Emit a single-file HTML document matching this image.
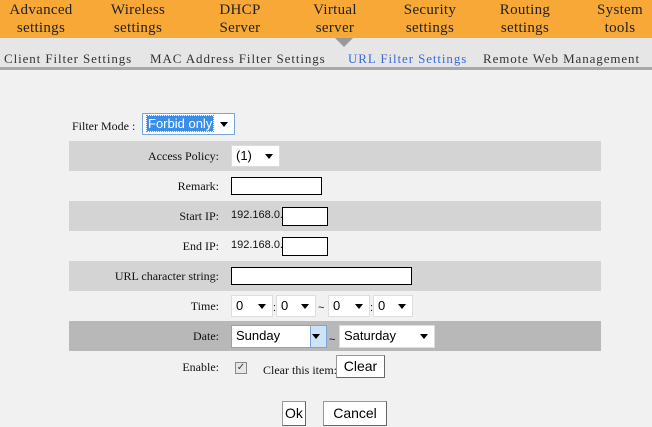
<!DOCTYPE html>
<html><head><style>
*{margin:0;padding:0;box-sizing:border-box}
body{width:652px;height:427px;background:#f1f1f1;font-family:"Liberation Serif",serif;position:relative;overflow:hidden}
.top{position:absolute;left:0;top:0;width:652px;height:38px;background:#f8a836}
.top div{position:absolute;top:1px;text-align:center;font-size:15px;line-height:18px;color:#222;letter-spacing:.3px}
.sub{position:absolute;left:0;top:38px;width:652px;height:32px;background:#e6e6e6;border-bottom:3px solid #a8a8a8}
.sub span{position:absolute;top:13px;font-size:13px;color:#333;letter-spacing:.9px}
.tri{position:absolute;left:335px;top:38px;width:0;height:0;border-left:9px solid transparent;border-right:9px solid transparent;border-top:9px solid #999}
.a{position:absolute;font-size:12px;color:#111}
.row{position:absolute;left:69px;width:532px;height:30px}
.g{background:#d4d4d4}.d{background:#b8b8b8}
.lab{position:absolute;right:382px;font-size:12px;color:#111;white-space:nowrap}
.box{position:absolute;background:#fff;border:1px solid #000}
.sel{position:absolute;background:#fff;border:1px solid #ddd;font-family:"Liberation Sans",sans-serif;font-size:13px;padding-left:4px;line-height:20px}
.sel:after{content:"";position:absolute;right:6px;top:8px;border-left:4px solid transparent;border-right:4px solid transparent;border-top:5px solid #000}
.btn{position:absolute;background:#fff;border:1px solid #999;border-bottom-color:#666;border-right-color:#666;font-family:"Liberation Sans",sans-serif;font-size:14px;text-align:center}
.t{position:absolute;font-family:"Liberation Sans",sans-serif;font-size:11px;color:#111}
</style></head><body>
<div class="top">
<div style="left:8px;width:66px">Advanced<br>settings</div>
<div style="left:110px;width:56px">Wireless<br>settings</div>
<div style="left:208px;width:64px">DHCP<br>Server</div>
<div style="left:300px;width:70px">Virtual<br>server</div>
<div style="left:390px;width:80px">Security<br>settings</div>
<div style="left:490px;width:70px">Routing<br>settings</div>
<div style="left:592px;width:56px">System<br>tools</div>
</div>
<div class="sub">
<span style="left:4px">Client Filter Settings</span>
<span style="left:150px">MAC Address Filter Settings</span>
<span style="left:348px;color:#3a6bd8">URL Filter Settings</span>
<span style="left:483px">Remote Web Management</span>
</div>
<div class="tri"></div>

<div class="a" style="left:72px;top:119px">Filter Mode :</div>
<div class="sel" style="left:142px;top:113px;width:93px;height:22px;border-color:#7aa7d8"><span style="background:#3b8ee8;color:#fff;outline:1px dotted #c80;padding:0 1px">Forbid only</span></div>

<div class="row g" style="top:141px"><div class="lab" style="top:8px">Access Policy:</div></div>
<div class="sel" style="left:231px;top:145px;width:49px;height:22px">(1)</div>

<div class="row" style="top:171px"><div class="lab" style="top:8px">Remark:</div></div>
<div class="box" style="left:231px;top:177px;width:91px;height:18px"></div>

<div class="row g" style="top:201px"><div class="lab" style="top:8px">Start IP:</div></div>
<div class="t" style="left:231px;top:209px">192.168.0.</div>
<div class="box" style="left:282px;top:207px;width:46px;height:19px"></div>

<div class="row" style="top:231px"><div class="lab" style="top:8px">End IP:</div></div>
<div class="t" style="left:231px;top:239px">192.168.0.</div>
<div class="box" style="left:282px;top:237px;width:46px;height:19px"></div>

<div class="row g" style="top:261px"><div class="lab" style="top:8px">URL character string:</div></div>
<div class="box" style="left:231px;top:267px;width:181px;height:18px"></div>

<div class="row" style="top:291px"><div class="lab" style="top:8px">Time:</div></div>
<div class="sel" style="left:231px;top:295px;width:42px;height:22px">0</div>
<div class="t" style="left:273px;top:302px">:</div>
<div class="sel" style="left:276px;top:295px;width:40px;height:22px">0</div>
<div class="t" style="left:318px;top:302px">~</div>
<div class="sel" style="left:328px;top:295px;width:42px;height:22px">0</div>
<div class="t" style="left:370px;top:302px">:</div>
<div class="sel" style="left:373px;top:295px;width:40px;height:22px">0</div>

<div class="row d" style="top:321px"><div class="lab" style="top:8px">Date:</div></div>
<div class="sel" style="left:231px;top:325px;width:96px;height:23px;border-color:#7aa7d8">Sunday<span style="position:absolute;right:0;top:0;width:16px;height:21px;background:#cde4f7;border-left:1px solid #7aa7d8"></span></div>
<div class="t" style="left:329px;top:334px">~</div>
<div class="sel" style="left:339px;top:325px;width:96px;height:23px">Saturday</div>

<div class="row" style="top:351px"><div class="lab" style="top:9px">Enable:</div></div>
<div style="position:absolute;left:235px;top:362px;width:12px;height:12px;border:1px solid #888;background:#e6e6e6;color:#335;font-size:10px;line-height:10px;text-align:center;font-family:'DejaVu Sans'">✓</div>
<div class="a" style="left:263px;top:363px">Clear this item:</div>
<div class="btn" style="left:336px;top:355px;width:49px;height:23px;line-height:20px">Clear</div>

<div class="btn" style="left:282px;top:401px;width:24px;height:25px;line-height:23px">Ok</div>
<div class="btn" style="left:323px;top:401px;width:64px;height:25px;line-height:23px">Cancel</div>
</body></html>
